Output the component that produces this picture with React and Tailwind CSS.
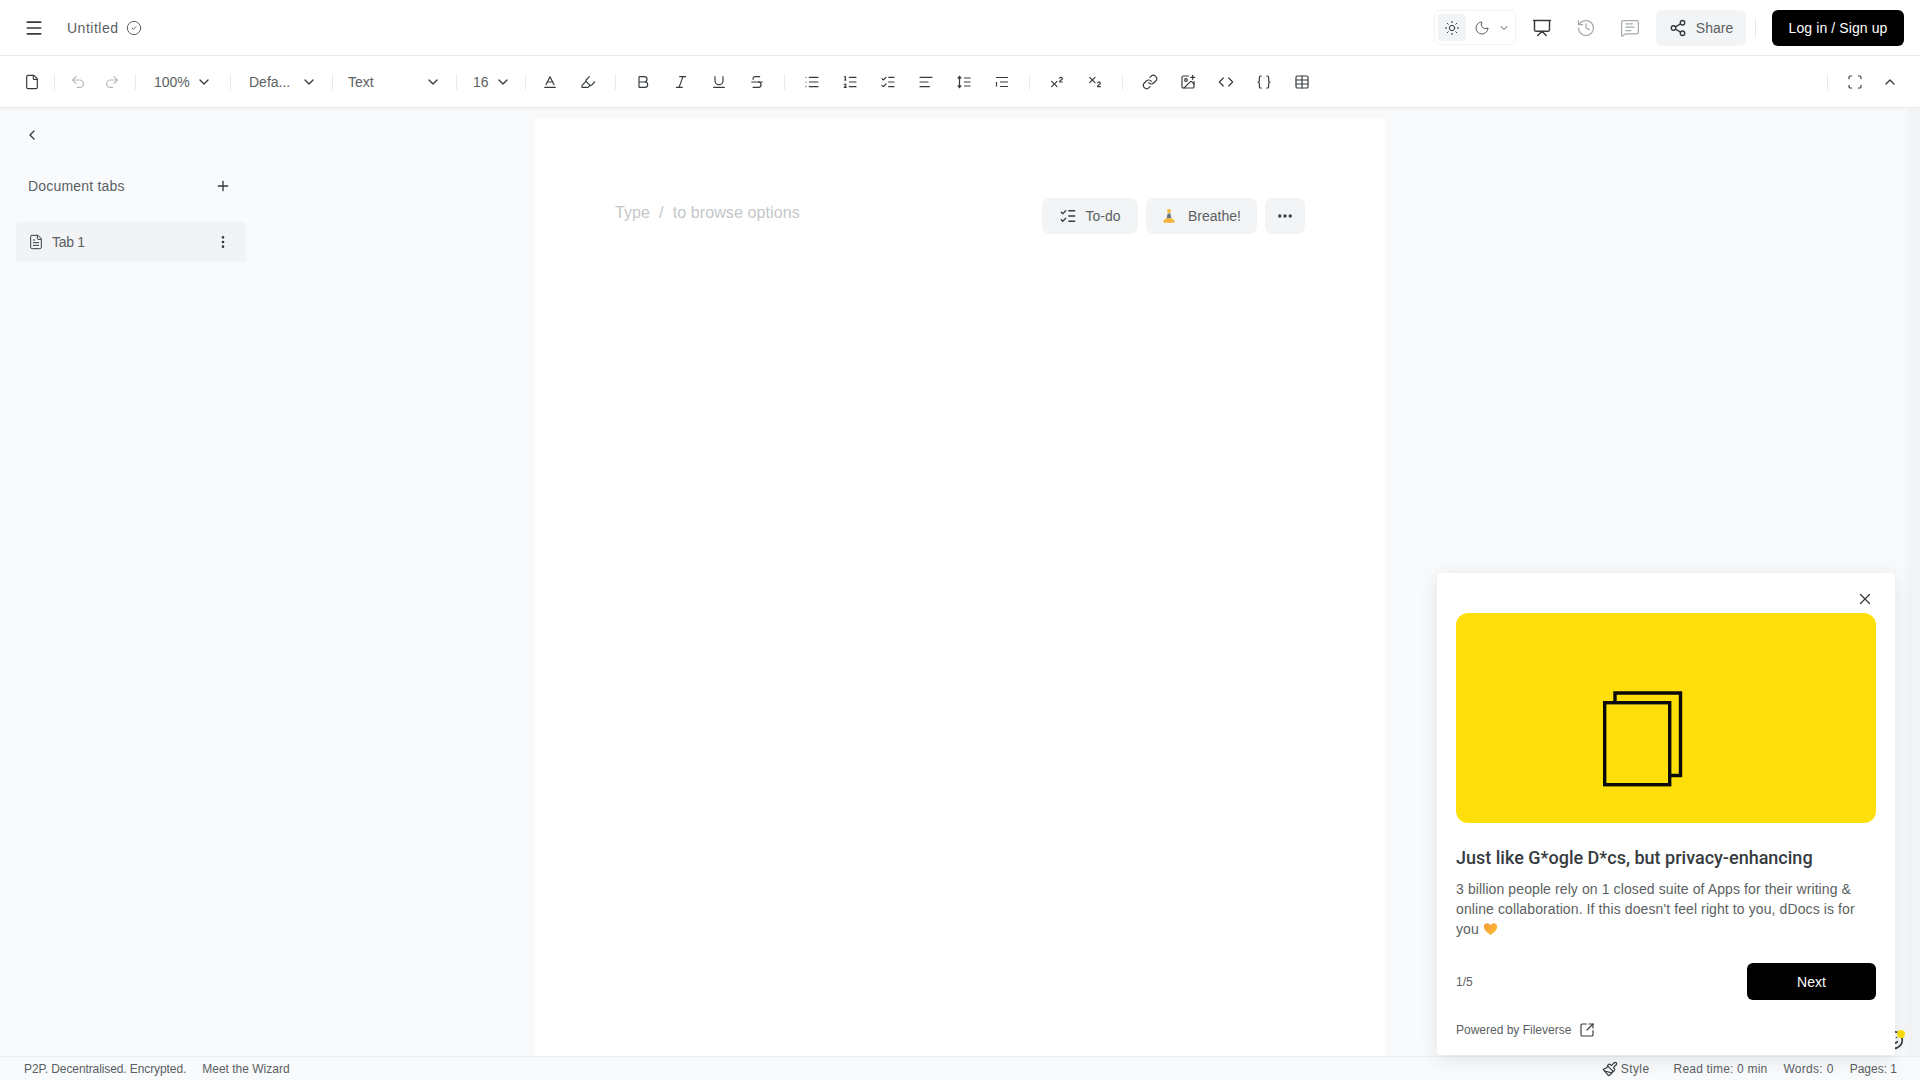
import {
  Menu, CircleCheck, File, Undo2, Redo2, ChevronDown, ChevronUp, ChevronLeft, Baseline, Highlighter,
  Bold, Italic, Underline, Strikethrough, List, ListOrdered, ListChecks, AlignLeft,
  Superscript, Subscript, Link, ImagePlus, Code, Braces, Table, Scan, Sun, Moon, Presentation, History,
  MessageSquareText, Share2, X, SquareArrowOutUpRight, Paintbrush, EllipsisVertical, Ellipsis, Plus,
  FileText, Smile,
} from 'lucide-react';

const Sep = ({ className = 'mx-2' }) => <div className={`w-px h-4 bg-[#e8ebec] ${className}`} />;

function ToolIcon({ icon: Icon, muted, className = 'w-[38px]' }) {
  return (
    <button className={`h-8 flex items-center justify-center ${className} ${muted ? 'text-[#b4b9bd]' : 'text-[#363b3f]'}`}>
      <Icon size={16} strokeWidth={1.75} />
    </button>
  );
}

function ToolSelect({ label, className }) {
  return (
    <button className={`flex items-center justify-between h-8 text-sm text-[#5b5f63] ${className}`}>
      <span>{label}</span>
      <ChevronDown size={16} strokeWidth={2} className="text-[#363b3f]" />
    </button>
  );
}

function LineHeightIcon() {
  return (
    <svg width="16" height="16" viewBox="0 0 16 16" fill="none" stroke="currentColor" strokeWidth="1.2">
      <path d="M3.500 2.500v11M1.800 4.500l1.700-2 1.700 2M1.800 11.500l1.700 2 1.700-2M8 4h6.500M8 8h6.500M8 12h6.500" />
    </svg>
  );
}

function IndentIcon() {
  return (
    <svg width="16" height="16" viewBox="0 0 16 16" fill="none" stroke="currentColor" strokeWidth="1.2">
      <path d="M2 3.500h12M6 8h8M6 12.500h8M2.500 8v4.500" />
    </svg>
  );
}

function LotusEmoji() {
  return (
    <svg width="14" height="16" viewBox="0 0 14 16">
      <circle cx="7" cy="3" r="2" fill="#f4b63f" />
      <path d="M5.600 5.500h2.800l1 5h-4.800z" fill="#6b7280" />
      <path d="M1 14c1-3 3-4 6-4s5 1 6 4c-2 1.200-10 1.200-12 0z" fill="#f4b63f" />
    </svg>
  );
}

function HeartEmoji() {
  return (
    <svg width="15" height="14" viewBox="0 0 15 14">
      <defs>
        <linearGradient id="heartFill" x1="0" y1="0" x2="1" y2="1">
          <stop offset="0" stopColor="#f79a3e" />
          <stop offset="1" stopColor="#fbc02d" />
        </linearGradient>
      </defs>
      <path d="M7.500 13C3 9.800.8 7.600.8 4.600.8 2.600 2.300 1.200 4 1.200c1.500 0 2.700.8 3.500 2 .8-1.200 2-2 3.500-2 1.700 0 3.200 1.400 3.200 3.400 0 3-2.200 5.200-6.700 8.400z" fill="url(#heartFill)" />
    </svg>
  );
}

export default function App() {
  return (
    <div className="relative h-screen flex flex-col overflow-hidden bg-[#f8fafc] font-['Liberation_Sans',sans-serif]">
      {/* Header */}
      <header className="h-14 shrink-0 bg-white border-b border-[#e8ebec] flex items-center justify-between pl-6 pr-4">
        <div className="flex items-center">
          <Menu size={20} strokeWidth={2} className="text-[#363b3f]" />
          <span className="ml-[23px] text-sm tracking-[0.5px] text-[#5b5f63]">Untitled</span>
          <CircleCheck size={16} strokeWidth={1.5} className="ml-[8px] text-[#5b5f63]" />
        </div>
        <div className="flex items-center">
          <div className="flex items-center h-[35px] w-[82px] border border-[#f1f3f4] rounded-md px-[3px]">
            <div className="w-7 h-[27px] bg-[#f1f3f4] rounded flex items-center justify-center">
              <Sun size={16} strokeWidth={1.5} className="text-[#363b3f]" />
            </div>
            <Moon size={16} strokeWidth={1.5} className="ml-2 text-[#5b5f63]" />
            <ChevronDown size={12} strokeWidth={2} className="ml-2 text-[#5b5f63]" />
          </div>
          <Presentation size={20} strokeWidth={1.75} className="ml-4 text-[#363b3f]" />
          <History size={20} strokeWidth={1.5} className="ml-6 text-[#a6abaf]" />
          <MessageSquareText size={20} strokeWidth={1.5} className="ml-6 text-[#a6abaf]" />
          <button className="ml-4 w-[90px] h-[36px] bg-[#f2f4f5] rounded-md flex items-center justify-center gap-[9px] text-sm text-[#5b5f63]">
            <Share2 size={18} strokeWidth={1.75} className="text-[#363b3f]" />
            Share
          </button>
          <div className="w-px h-5 bg-[#e8ebec] ml-[9px] mr-4" />
          <button className="w-[132px] h-9 bg-black text-white rounded-md text-sm tracking-[0.1px]">Log in / Sign up</button>
        </div>
      </header>

      {/* Toolbar */}
      <div className="h-[52px] shrink-0 bg-white border-b border-[#e8ebec] shadow-[0_1px_3px_rgba(0,0,0,0.03)] flex items-center justify-between pl-[13px] pr-[14px]">
        <div className="flex items-center">
          <ToolIcon icon={File} />
          <Sep className="mx-[3px]" />
          <ToolIcon icon={Undo2} muted className="w-[38px] ml-px" />
          <ToolIcon icon={Redo2} muted className="w-[30px]" />
          <Sep className="ml-2 mr-[3px]" />
          <ToolSelect label="100%" className="w-[88px] px-[15px]" />
          <Sep className="mx-[3px]" />
          <ToolSelect label="Defa..." className="w-[95px] pl-[15px] pr-3" />
          <Sep className="mx-[3px]" />
          <ToolSelect label="Text" className="w-[117px] px-3" />
          <Sep className="mx-[3px]" />
          <ToolSelect label="16" className="w-[62px] pl-[13px] pr-[11px]" />
          <Sep className="ml-[3px] mr-[5px]" />
          <ToolIcon icon={Baseline} />
          <ToolIcon icon={Highlighter} />
          <Sep />
          <ToolIcon icon={Bold} />
          <ToolIcon icon={Italic} />
          <ToolIcon icon={Underline} />
          <ToolIcon icon={Strikethrough} />
          <Sep />
          <ToolIcon icon={List} />
          <ToolIcon icon={ListOrdered} />
          <ToolIcon icon={ListChecks} />
          <ToolIcon icon={AlignLeft} />
          <ToolIcon icon={LineHeightIcon} />
          <ToolIcon icon={IndentIcon} />
          <Sep />
          <ToolIcon icon={Superscript} />
          <ToolIcon icon={Subscript} />
          <Sep />
          <ToolIcon icon={Link} />
          <ToolIcon icon={ImagePlus} />
          <ToolIcon icon={Code} />
          <ToolIcon icon={Braces} />
          <ToolIcon icon={Table} />
        </div>
        <div className="flex items-center">
          <Sep />
          <ToolIcon icon={Scan} />
          <button className="w-8 h-8 flex items-center justify-center text-[#363b3f]">
            <ChevronUp size={16} strokeWidth={2} />
          </button>
        </div>
      </div>

      {/* Body */}
      <div className="flex-1 min-h-0 flex">
        <aside className="w-[535px] shrink-0 pl-4 pt-[15px]">
          <div className="w-[230px]">
            <ChevronLeft size={16} strokeWidth={2} className="ml-2 mt-[4px] text-[#363b3f]" />
            <div className="flex items-center justify-between mt-[33px] pl-3 pr-[15px]">
              <span className="text-sm tracking-[0.2px] text-[#5b5f63]">Document tabs</span>
              <Plus size={16} strokeWidth={2} className="text-[#363b3f]" />
            </div>
            <div className="mt-[26px] h-10 bg-[#f1f3f5] rounded flex items-center pl-3 pr-[15px] text-sm text-[#5b5f63]">
              <FileText size={16} strokeWidth={1.5} className="text-[#363b3f]" />
              <span className="ml-[8px] flex-1 tracking-[-0.3px]">Tab 1</span>
              <EllipsisVertical size={16} strokeWidth={2} className="text-[#363b3f]" />
            </div>
          </div>
        </aside>
        <main className="w-[850px] mt-[11px] bg-white px-20 pt-[79px]">
          <div className="flex justify-between items-start">
            <div className="flex items-center text-base tracking-[0.1px] text-[#c3c7ca] mt-[3px] h-6">
              <span>Type</span>
              <span className="mx-[9px]">/</span>
              <span>to browse options</span>
            </div>
            <div className="flex gap-2">
              <button className="w-[96px] h-9 bg-[#f2f4f5] rounded-lg flex items-center justify-center gap-2 text-sm text-[#5b5f63]">
                <ListChecks size={18} strokeWidth={1.75} className="text-[#363b3f]" />
                To-do
              </button>
              <button className="w-[111px] h-9 bg-[#f2f4f5] rounded-lg flex items-center justify-center gap-3 text-sm text-[#5b5f63]">
                <LotusEmoji />
                Breathe!
              </button>
              <button className="w-10 h-9 bg-[#f2f4f5] rounded-lg flex items-center justify-center text-[#363b3f]">
                <Ellipsis size={18} strokeWidth={2.5} />
              </button>
            </div>
          </div>
        </main>
      </div>

      {/* Status bar */}
      <footer className="h-6 shrink-0 border-t border-[#eceef0] bg-[#f8fafc] flex items-center justify-between pl-6 pr-[23px] text-xs text-[#5b5f63]">
        <div className="flex items-center gap-4">
          <span className="tracking-[-0.1px]">P2P. Decentralised. Encrypted.</span>
          <span>Meet the Wizard</span>
        </div>
        <div className="flex items-center">
          <Paintbrush size={16} strokeWidth={1.75} className="text-[#363b3f]" />
          <span className="ml-[3px] tracking-[0.4px]">Style</span>
          <span className="ml-6 tracking-[0.2px]">Read time: 0 min</span>
          <span className="ml-4 tracking-[0.3px]">Words: 0</span>
          <span className="ml-4">Pages: 1</span>
        </div>
      </footer>

      {/* Soft shade along the right edge */}
      <div className="absolute right-0 top-[108px] bottom-6 w-[18px] bg-linear-to-r from-[#f8fafc] via-[#f1f3f5] to-[#f4f5f7]" />

      {/* Help button behind the onboarding card */}
      <div className="absolute left-[1884px] top-[1030px] text-[#363b3f]">
        <Smile size={20} strokeWidth={2} />
        <span className="absolute right-[-1px] top-0 w-2 h-2 rounded-full bg-[#ffdf0a]" />
      </div>

      {/* Onboarding card */}
      <div className="absolute left-[1437px] top-[573px] w-[458px] h-[482px] bg-white rounded shadow-[0_4px_20px_rgba(0,0,0,0.1)] px-[19px] pt-10">
        <button className="absolute right-[21px] top-[17px] text-[#363b3f]">
          <X size={18} strokeWidth={1.75} />
        </button>
        <div className="w-[420px] h-[210px] bg-[#ffdf0a] rounded-xl">
          <svg width="420" height="210" viewBox="0 0 420 210" fill="none" stroke="#0a0a0a" strokeWidth="3.4">
            <path d="M159 88V80H224.500V162.500H215" />
            <rect x="148.700" y="89.700" width="65" height="82" />
          </svg>
        </div>
        <h2 className="mt-[23px] font-['Roboto',sans-serif] text-lg leading-6 font-medium text-[#363b3f]">Just like G*ogle D*cs, but privacy-enhancing</h2>
        <p className="mt-[9px] text-sm leading-5 tracking-[0.1px] text-[#5b5f63]">
          3 billion people rely on 1 closed suite of Apps for their writing & online collaboration. If this doesn't feel right to you, dDocs is for you <span className="inline-block align-[-2px]"><HeartEmoji /></span>
        </p>
        <div className="mt-[24px] flex items-center justify-between">
          <span className="text-xs text-[#5b5f63]">1/5</span>
          <button className="w-[129px] h-[37px] bg-black text-white text-sm font-medium rounded-md">Next</button>
        </div>
        <div className="mt-[22px] flex items-center text-xs text-[#5b5f63]">
          Powered by Fileverse
          <SquareArrowOutUpRight size={16} strokeWidth={1.75} className="ml-2 text-[#363b3f]" />
        </div>
      </div>
    </div>
  );
}
